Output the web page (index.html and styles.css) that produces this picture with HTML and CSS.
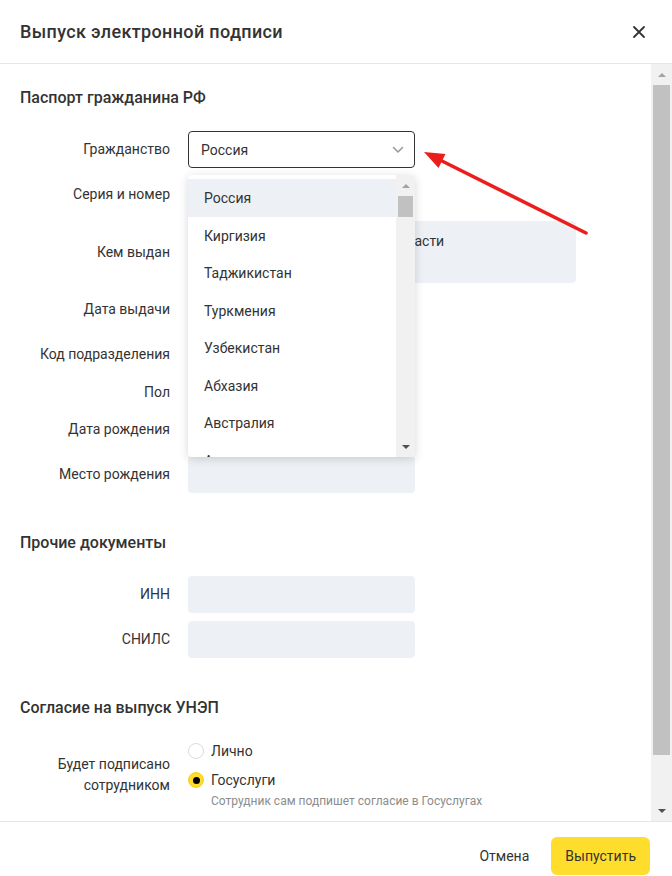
FILE: index.html
```html
<!DOCTYPE html>
<html lang="ru">
<head>
<meta charset="utf-8">
<title>Выпуск электронной подписи</title>
<link rel="stylesheet" href="styles.css">
</head>
<body>
<div class="modal">
  <header class="head">
    <h1 class="title">Выпуск электронной подписи</h1>
    <button class="close" aria-label="Закрыть">
      <svg width="14" height="14" viewBox="0 0 14 14"><path d="M2 2L12 12M12 2L2 12" stroke="#333" stroke-width="1.8" stroke-linecap="round" fill="none"/></svg>
    </button>
  </header>

  <div class="body">
    <div class="content">
      <section class="sec">
        <h2 class="sec-title">Паспорт гражданина РФ</h2>
        <div class="form">
          <div class="row">
            <div class="lbl">Гражданство</div>
            <div class="select-wrap">
              <div class="select">
                <span>Россия</span>
                <svg width="12" height="8" viewBox="0 0 12 8"><path d="M1.5 1.5L6 6L10.5 1.5" stroke="#9a9a9a" stroke-width="1.6" fill="none" stroke-linecap="round" stroke-linejoin="round"/></svg>
              </div>
              <div class="menu">
                <ul class="menu-list">
                  <li class="active">Россия</li>
                  <li>Киргизия</li>
                  <li>Таджикистан</li>
                  <li>Туркмения</li>
                  <li>Узбекистан</li>
                  <li>Абхазия</li>
                  <li>Австралия</li>
                  <li>Австрия</li>
                </ul>
                <div class="mscroll">
                  <div class="sb-btn"><span class="tri-up"></span></div>
                  <div class="mthumb"></div>
                  <div class="track"></div>
                  <div class="sb-btn"><span class="tri-down"></span></div>
                </div>
              </div>
            </div>
          </div>
          <div class="row"><div class="lbl">Серия и номер</div><div class="field"></div></div>
          <div class="row"><div class="lbl">Кем выдан</div><div class="field wide">ОУФМС России по Тверской области</div></div>
          <div class="row"><div class="lbl">Дата выдачи</div><div class="field"></div></div>
          <div class="row"><div class="lbl">Код подразделения</div><div class="field"></div></div>
          <div class="row short">
            <div class="lbl">Пол</div>
            <div class="radios inline">
              <div class="opt"><span class="dot"></span><span>Мужской</span></div>
              <div class="opt"><span class="dot"></span><span>Женский</span></div>
            </div>
          </div>
          <div class="row"><div class="lbl">Дата рождения</div><div class="field"></div></div>
          <div class="row"><div class="lbl">Место рождения</div><div class="field"></div></div>
        </div>
      </section>

      <section class="sec">
        <h2 class="sec-title">Прочие документы</h2>
        <div class="form">
          <div class="row"><div class="lbl">ИНН</div><div class="field"></div></div>
          <div class="row"><div class="lbl">СНИЛС</div><div class="field"></div></div>
        </div>
      </section>

      <section class="sec">
        <h2 class="sec-title">Согласие на выпуск УНЭП</h2>
        <div class="form">
          <div class="row">
            <div class="lbl">Будет подписано сотрудником</div>
            <div class="radios">
              <div class="opt"><span class="dot"></span><span>Лично</span></div>
              <div class="opt"><span class="dot on"></span><span>Госуслуги</span></div>
              <div class="hint">Сотрудник сам подпишет согласие в Госуслугах</div>
            </div>
          </div>
        </div>
      </section>
    </div>

    <div class="vscroll">
      <div class="sb-btn"><span class="tri-up"></span></div>
      <div class="thumb"></div>
      <div class="track"></div>
      <div class="sb-btn"><span class="tri-down"></span></div>
    </div>
  </div>

  <footer class="foot">
    <button class="btn">Отмена</button>
    <button class="btn primary">Выпустить</button>
  </footer>

  <svg class="pointer" width="672" height="876" viewBox="0 0 672 876">
    <line x1="586" y1="233" x2="440" y2="160" stroke="#ea1f1b" stroke-width="3.5" stroke-linecap="round"/>
    <polygon points="424,152 438.5,168 445.5,154" fill="#ea1f1b"/>
  </svg>
</div>
</body>
</html>
```

FILE: styles.css
```css
* { box-sizing: border-box; }

html, body {
  margin: 0;
  padding: 0;
  height: 100%;
}

body {
  font-family: Roboto, "Noto Sans", "Liberation Sans", sans-serif;
  font-size: 14px;
  color: #333;
  background: #fff;
  overflow: hidden;
}

.modal {
  position: relative;
  height: 876px;
  display: flex;
  flex-direction: column;
}

/* header */
.head {
  height: 64px;
  flex-shrink: 0;
  border-bottom: 1px solid #e6e6e6;
  display: flex;
  align-items: center;
  justify-content: space-between;
  padding: 0 26px 0 20px;
}

.title {
  margin: 0;
  font-size: 18px;
  font-weight: 500;
  letter-spacing: 0.35px;
  line-height: 24px;
}

.close {
  border: 0;
  background: transparent;
  padding: 0;
  width: 14px;
  height: 14px;
  display: flex;
}

/* body */
.body {
  flex: 1;
  min-height: 0;
  display: flex;
}

.content {
  flex: 1;
  overflow: hidden;
  padding: 22px 0 0 20px;
}

.sec + .sec { margin-top: 38px; }

.sec-title {
  margin: 0 0 21px;
  font-size: 16px;
  font-weight: 500;
  line-height: 24px;
}

.form {
  display: flex;
  flex-direction: column;
  gap: 8px;
}

.row {
  display: flex;
  align-items: center;
}

.row.short { height: 22px; }

.lbl {
  width: 150px;
  flex-shrink: 0;
  margin-right: 18px;
  text-align: right;
  line-height: 21px;
}

.field {
  width: 227px;
  height: 37px;
  background: #edf1f5;
  border-radius: 4px;
}

.field.wide {
  width: 388px;
  height: 62px;
  padding: 10px 13px;
  line-height: 20px;
}

/* select */
.select-wrap { position: relative; }

.select {
  width: 227px;
  height: 37px;
  border: 1px solid #333;
  border-radius: 4px;
  display: flex;
  align-items: center;
  justify-content: space-between;
  padding: 0 10px 0 12px;
}

.menu {
  position: absolute;
  left: 0;
  top: 44px;
  width: 227px;
  height: 282px;
  background: #fff;
  border-radius: 4px;
  box-shadow: 0 2px 10px rgba(0, 0, 0, 0.16);
  display: flex;
  overflow: hidden;
  z-index: 5;
}

.menu-list {
  flex: 1;
  list-style: none;
  margin: 0;
  padding: 4px 0 0;
}

.menu-list li {
  height: 37.5px;
  line-height: 38.5px;
  padding-left: 16px;
  white-space: nowrap;
}

.menu-list li.active { background: #edf1f5; }

.mscroll {
  width: 19px;
  flex-shrink: 0;
  background: #f1f1f1;
  display: flex;
  flex-direction: column;
}

.mthumb {
  height: 21px;
  margin: 0 2px;
  background: #c1c1c1;
}

/* scrollbars */
.vscroll {
  width: 21px;
  flex-shrink: 0;
  background: #f1f1f1;
  display: flex;
  flex-direction: column;
}

.sb-btn {
  height: 21px;
  flex-shrink: 0;
  display: flex;
  align-items: center;
  justify-content: center;
}

.thumb {
  height: 670px;
  margin: 0 2px;
  background: #c1c1c1;
}

.track { flex: 1; }

.tri-up {
  width: 0;
  height: 0;
  border-left: 4px solid transparent;
  border-right: 4px solid transparent;
  border-bottom: 4px solid #a3a3a3;
}

.tri-down {
  width: 0;
  height: 0;
  border-left: 4px solid transparent;
  border-right: 4px solid transparent;
  border-top: 4px solid #505050;
}

/* radios */
.radios {
  display: flex;
  flex-direction: column;
}

.radios.inline {
  flex-direction: row;
  gap: 24px;
}

.opt {
  display: flex;
  align-items: center;
  gap: 7px;
  line-height: 20px;
}

.radios:not(.inline) .opt + .opt { margin-top: 9px; }

.dot {
  width: 16px;
  height: 16px;
  border-radius: 50%;
  border: 1px solid #dcdcdc;
  background: #fff;
  display: flex;
  align-items: center;
  justify-content: center;
}

.dot.on {
  background: #ffdd2d;
  border-color: #f5d21c;
}

.dot.on::after {
  content: "";
  width: 7px;
  height: 7px;
  border-radius: 50%;
  background: #000;
}

.hint {
  margin-top: 3px;
  padding-left: 23px;
  font-size: 12px;
  line-height: 16px;
  color: #8c8c8c;
}

/* footer */
.foot {
  height: 55px;
  flex-shrink: 0;
  border-top: 1px solid #e6e6e6;
  display: flex;
  justify-content: flex-end;
  align-items: flex-start;
  gap: 6px;
  padding: 15px 22px 0;
}

.btn {
  height: 38px;
  padding: 0 16px;
  border: 0;
  border-radius: 6px;
  background: transparent;
  font: inherit;
  font-size: 14px;
  color: #333;
}

.btn.primary {
  background: #ffdd2d;
  padding: 0 14px;
}

.pointer {
  position: absolute;
  left: 0;
  top: 0;
  pointer-events: none;
  z-index: 10;
}
```
